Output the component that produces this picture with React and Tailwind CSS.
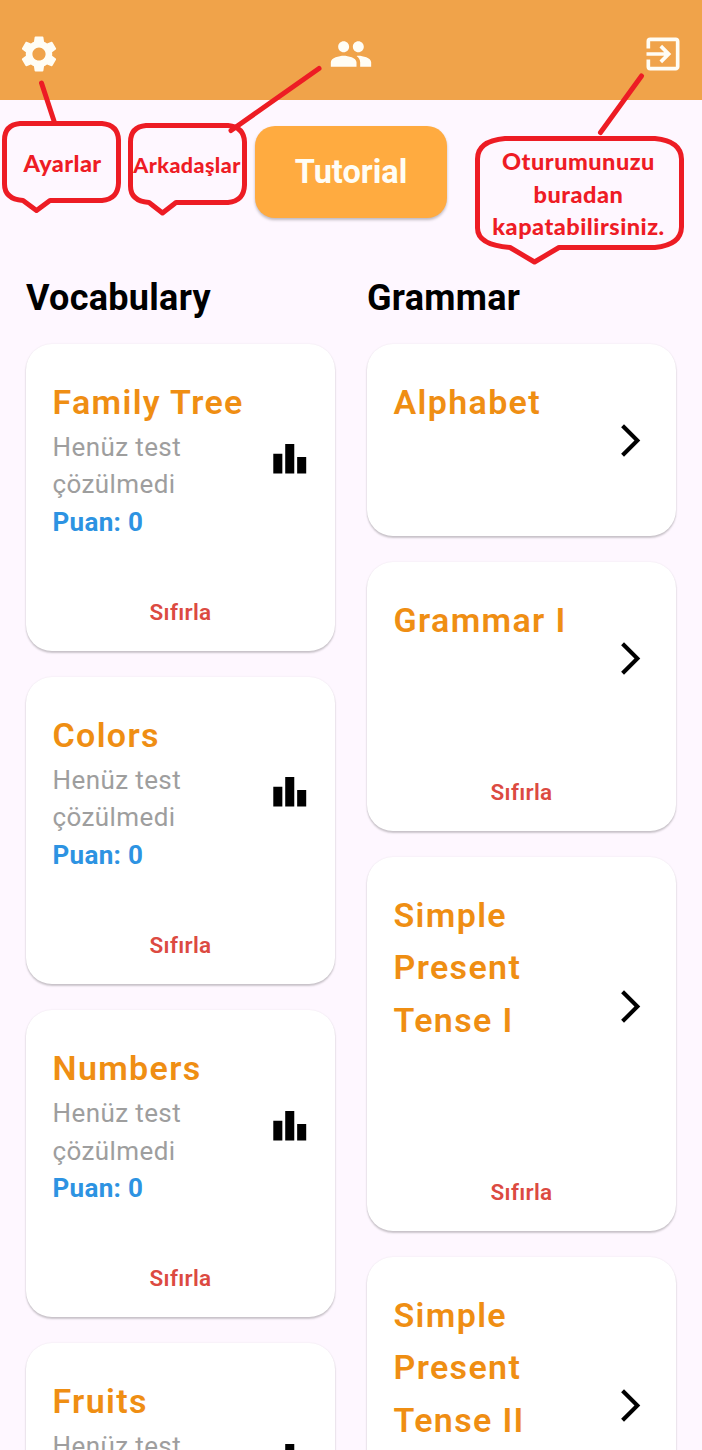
import { MdSettings, MdPeople, MdExitToApp, MdLeaderboard, MdArrowForwardIos } from "react-icons/md";

const vocabulary = ["Family Tree", "Colors", "Numbers", "Fruits"];

const grammar = [
  { title: "Alphabet", reset: false },
  { title: "Grammar I", reset: true },
  { title: "Simple Present Tense I", reset: true },
  { title: "Simple Present Tense II", reset: true },
];

function Card({ title, icon, reset, children }) {
  return (
    <article className="shrink-0 rounded-[26px] bg-white pt-[33px] shadow-[0_2px_2px_rgba(0,0,0,0.2),0_0_2px_rgba(0,0,0,0.08)]">
      <div className="flex items-center pr-[26px] pb-8 pl-[26.5px]">
        <div className="min-w-0 flex-1">
          <h3 className="-mt-px mb-px max-w-[200px] text-[34px] leading-[52.1px] font-semibold tracking-[1.35px] text-[#ef8e13]">{title}</h3>
          {children}
        </div>
        {icon}
      </div>
      {reset && (
        <button className="flex h-[77.7px] w-full items-center justify-center pt-px text-[22.5px] font-semibold tracking-[0.3px] text-[#dc4a41]">
          Sıfırla
        </button>
      )}
    </article>
  );
}

function Annotations() {
  return (
    <div className="pointer-events-none absolute inset-0 text-center font-['Lato',sans-serif] font-black text-[#ee1c25]">
      <svg className="absolute inset-0" width="702" height="280" fill="none" stroke="#ed1c24" strokeWidth="5" strokeLinecap="round" strokeLinejoin="round">
        <path d="M41.500 83 54 121M319 68.500 231 130.500M641.500 76 600.500 132.500" />
        <path d="M20 123.500H102Q118 125 118.500 140V183Q118 199 102 200.500H50L36.500 210.500 23 200.500Q4.500 199 4.500 184V140Q4.500 125 20 123.500Z" />
        <path d="M146 125.500H228Q244 127 244.500 142V185Q244 201 228 202.500H176L162.500 213 149 202.500Q130.500 201 130.500 186V142Q130.500 127 146 125.500Z" />
        <path d="M505 138.500H655Q681 141 681.500 159V227Q681 245 655 247.500H559L534.500 262 510 247.500Q477.500 245 477.500 228V159Q477.500 141 505 138.500Z" />
      </svg>
      <span className="absolute top-[148px] left-[3px] w-[119px] text-[23.5px] leading-[30px] tracking-[0.4px]">Ayarlar</span>
      <span className="absolute top-[150px] left-[127px] w-[120px] text-[21.5px] leading-[30px] tracking-[0.4px]">Arkadaşlar</span>
      <span className="absolute top-[145px] left-[478px] w-[201px] text-[23.5px] leading-[32.500px] tracking-[0.5px]">
        Oturumunuzu
        <br />
        buradan
        <br />
        kapatabilirsiniz.
      </span>
    </div>
  );
}

export default function App() {
  return (
    <div className="relative h-[1450px] w-[702px] overflow-hidden bg-[#fef7ff] font-['Roboto',sans-serif]">
      <header className="flex h-[100px] items-start justify-between bg-[#f0a34a] px-[17px] pt-8 text-[#fffdf5]">
        <MdSettings size={44} />
        <MdPeople size={44} />
        <MdExitToApp size={44} />
      </header>

      <div className="flex justify-center pt-[26px]">
        <button className="h-[92px] w-[192px] rounded-[20px] bg-[#ffab40] text-[32.5px] font-bold tracking-[0px] text-[#fffdf5] shadow-[0_2px_3px_rgba(0,0,0,0.25)]">
          Tutorial
        </button>
      </div>

      <main className="grid grid-cols-2 gap-8 px-[26px] pt-[53.5px]">
        <section className="flex flex-col gap-[26px]">
          <h2 className="h-[46px] text-[36px] leading-[53px] font-bold tracking-[0.3px] text-black">Vocabulary</h2>
          {vocabulary.map((title) => (
            <Card key={title} title={title} reset icon={<MdLeaderboard size={39.5} className="shrink-0" />}>
              <p className="max-w-[150px] text-[26px] leading-[37.5px] tracking-[0.4px] text-[#9e9e9e]">Henüz test çözülmedi</p>
              <p className="text-[26px] leading-[37.5px] font-bold tracking-[0.3px] text-[#2d93e2]">Puan: 0</p>
            </Card>
          ))}
        </section>
        <section className="flex flex-col gap-[26px]">
          <h2 className="h-[46px] text-[36px] leading-[53px] font-bold tracking-[0.3px] text-black">Grammar</h2>
          {grammar.map(({ title, reset }) => (
            <Card key={title} title={title} reset={reset} icon={<MdArrowForwardIos size={39} className="shrink-0" />}>
              <div className="h-[75px]" />
            </Card>
          ))}
        </section>
      </main>

      <Annotations />
    </div>
  );
}
